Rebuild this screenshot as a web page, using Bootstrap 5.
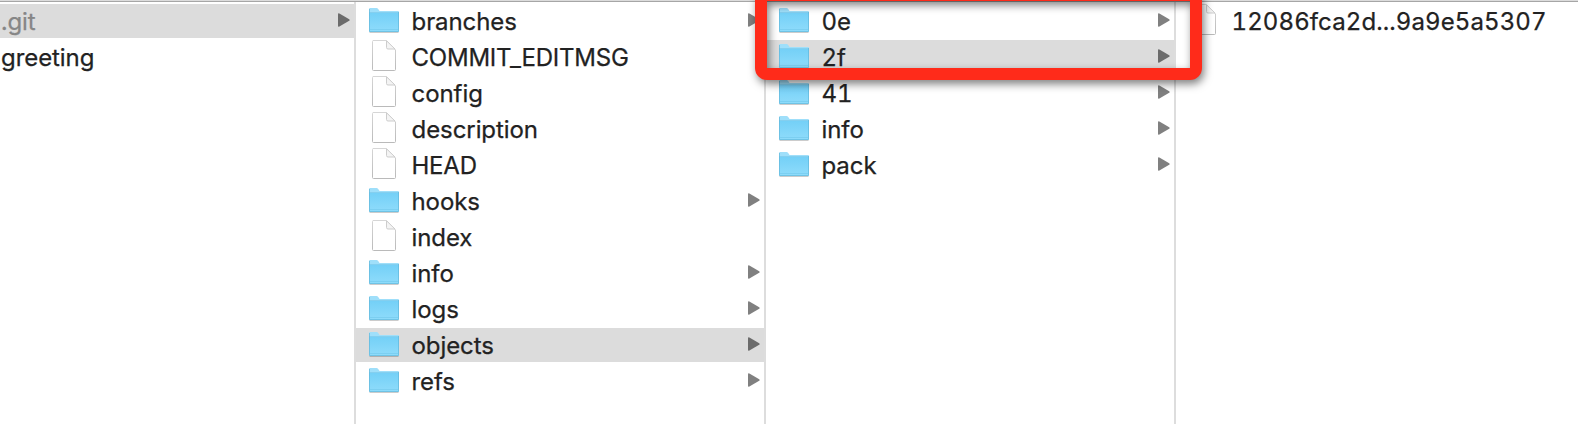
<!DOCTYPE html>
<html lang="en">
<head>
<meta charset="utf-8">
<title>Finder columns</title>
<link href="https://cdn.jsdelivr.net/npm/bootstrap@5.3.0/dist/css/bootstrap.min.css" rel="stylesheet">
<style>
body{font-family:Inter,"Liberation Sans",sans-serif;font-size:24px;font-weight:400;line-height:34px;color:#222;background:#fff}
.browser{height:424px}
.topline{height:2px;background:linear-gradient(#dcdcdc 50%,#a6a6a6 50%)}
.pane{width:410px;border-right:2px solid #ddd;padding-top:2px;gap:2px}
.pane-first{width:356px}
.pane-last{width:402px;border-right:0}
.entry{height:34px;padding-left:13px;padding-right:4px}
.pane-first .entry{padding-left:1px}
.entry.selected{background:#dcdcdc}
.ico{width:30px;height:34px;margin-right:12.5px}
.arrow{width:12px;height:14px;margin-top:-2px;fill:#808080}
.selected .arrow{fill:#6b6b6b}
.label{letter-spacing:-.07px;position:relative;top:1px;white-space:nowrap;font-variant-numeric:tabular-nums;-webkit-text-stroke:.25px currentColor}
.label.caps{letter-spacing:-.22px}
.label.digits{letter-spacing:.1px}
.label.dimmed{color:#868686}
.highlight{left:755px;top:-11px;width:447px;height:91px;border:12px solid #ff2b1a;border-radius:12px;filter:drop-shadow(2px 4px 4px rgba(0,0,0,.5))}
</style>
<script src="https://cdn.jsdelivr.net/npm/bootstrap@5.3.0/dist/js/bootstrap.bundle.min.js"></script>
</head>
<body>
<svg width="0" height="0" class="position-absolute">
<defs>
<linearGradient id="fg" x1="0" y1="0" x2="0" y2="1"><stop offset="0" stop-color="#74d0f7"/><stop offset="1" stop-color="#8fdcfb"/></linearGradient>
<linearGradient id="pg" x1="0" y1="0" x2="0" y2="1"><stop offset="0" stop-color="#d6d6d6"/><stop offset="1" stop-color="#bababa"/></linearGradient>
</defs>
<symbol id="folder" viewBox="0 0 30 34">
<path d="M.5 28.5h29" stroke="#000" stroke-opacity=".2" stroke-width="1"/>
<path d="M0 5.2Q0 4 1.200 4H7.500Q8.500 4 9.200 5L10.600 7H29Q30 7 30 8V10H0Z" fill="#9fdffa"/>
<path d="M0 9H30V27Q30 28 29 28H1Q0 28 0 27Z" fill="url(#fg)"/>
<path d="M0 8.500H30" stroke="#69bfe3" stroke-opacity=".5"/>
<path d="M.5 5V27.500H29.500V8" fill="none" stroke="#60b5d9" stroke-opacity=".65"/>
<path d="M1 25.500H29" stroke="#6cc4e8" stroke-opacity=".5"/>
</symbol>
<symbol id="file" viewBox="0 0 30 34">
<path d="M4 .5H17.500L26.500 10V29.500Q26.500 30.500 25.500 30.500H4.500Q3.500 30.500 3.500 29.500V1.500Q3.500 .5 4.500 .5Z" fill="#fff" stroke="url(#pg)"/>
<path d="M17.500 .8V7.500Q17.500 9 19 9H26Z" fill="#f4f4f4" stroke="#cdcdcd"/>
</symbol>
<symbol id="tri" viewBox="0 0 12 14"><path d="M0 1.200Q0-.3 1.400.4L11.200 6.200Q12.200 7 11.200 7.800L1.400 13.600Q0 14.300 0 12.800Z"/></symbol>
</svg>
<main class="browser position-relative overflow-hidden d-flex flex-column">
<div class="topline flex-shrink-0"></div>
<div class="d-flex flex-grow-1">
<section class="pane pane-first d-flex flex-column flex-shrink-0">
<div class="entry selected d-flex align-items-center"><span class="label dimmed">.git</span><svg class="arrow ms-auto"><use href="#tri"/></svg></div>
<div class="entry d-flex align-items-center"><span class="label">greeting</span></div>
</section>
<section class="pane d-flex flex-column flex-shrink-0">
<div class="entry d-flex align-items-center"><svg class="ico"><use href="#folder"/></svg><span class="label">branches</span><svg class="arrow ms-auto"><use href="#tri"/></svg></div>
<div class="entry d-flex align-items-center"><svg class="ico"><use href="#file"/></svg><span class="label caps">COMMIT_EDITMSG</span></div>
<div class="entry d-flex align-items-center"><svg class="ico"><use href="#file"/></svg><span class="label">config</span></div>
<div class="entry d-flex align-items-center"><svg class="ico"><use href="#file"/></svg><span class="label">description</span></div>
<div class="entry d-flex align-items-center"><svg class="ico"><use href="#file"/></svg><span class="label caps">HEAD</span></div>
<div class="entry d-flex align-items-center"><svg class="ico"><use href="#folder"/></svg><span class="label">hooks</span><svg class="arrow ms-auto"><use href="#tri"/></svg></div>
<div class="entry d-flex align-items-center"><svg class="ico"><use href="#file"/></svg><span class="label">index</span></div>
<div class="entry d-flex align-items-center"><svg class="ico"><use href="#folder"/></svg><span class="label">info</span><svg class="arrow ms-auto"><use href="#tri"/></svg></div>
<div class="entry d-flex align-items-center"><svg class="ico"><use href="#folder"/></svg><span class="label">logs</span><svg class="arrow ms-auto"><use href="#tri"/></svg></div>
<div class="entry selected d-flex align-items-center"><svg class="ico"><use href="#folder"/></svg><span class="label">objects</span><svg class="arrow ms-auto"><use href="#tri"/></svg></div>
<div class="entry d-flex align-items-center"><svg class="ico"><use href="#folder"/></svg><span class="label">refs</span><svg class="arrow ms-auto"><use href="#tri"/></svg></div>
</section>
<section class="pane d-flex flex-column flex-shrink-0">
<div class="entry d-flex align-items-center"><svg class="ico"><use href="#folder"/></svg><span class="label">0e</span><svg class="arrow ms-auto"><use href="#tri"/></svg></div>
<div class="entry selected d-flex align-items-center"><svg class="ico"><use href="#folder"/></svg><span class="label">2f</span><svg class="arrow ms-auto"><use href="#tri"/></svg></div>
<div class="entry d-flex align-items-center"><svg class="ico"><use href="#folder"/></svg><span class="label">41</span><svg class="arrow ms-auto"><use href="#tri"/></svg></div>
<div class="entry d-flex align-items-center"><svg class="ico"><use href="#folder"/></svg><span class="label">info</span><svg class="arrow ms-auto"><use href="#tri"/></svg></div>
<div class="entry d-flex align-items-center"><svg class="ico"><use href="#folder"/></svg><span class="label">pack</span><svg class="arrow ms-auto"><use href="#tri"/></svg></div>
</section>
<section class="pane pane-last d-flex flex-column">
<div class="entry d-flex align-items-center"><svg class="ico"><use href="#file"/></svg><span class="label digits">12086fca2d...9a9e5a5307</span></div>
</section>
</div>
<div class="highlight position-absolute"></div>
</main>
</body>
</html>
